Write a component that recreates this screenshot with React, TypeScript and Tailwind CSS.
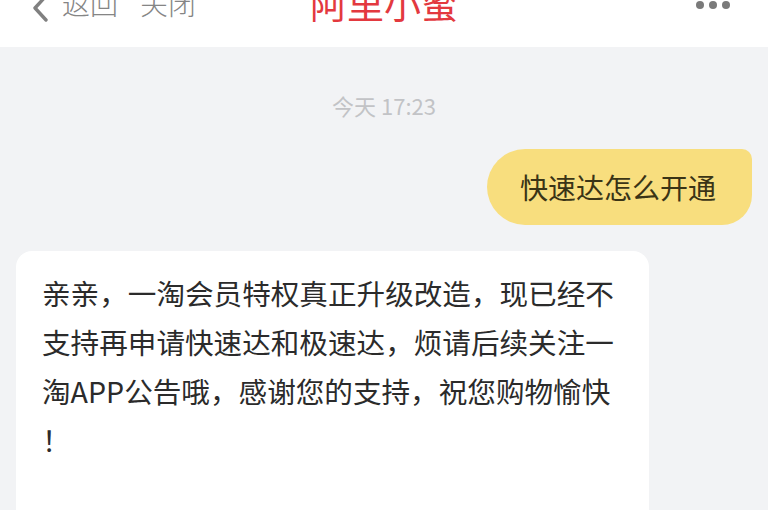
import React from "react";

const font = '"Noto Sans CJK SC", "Noto Sans", sans-serif';

const lines = [
  "亲亲，一淘会员特权真正升级改造，现已经不",
  "支持再申请快速达和极速达，烦请后续关注一",
  "淘APP公告哦，感谢您的支持，祝您购物愉快",
  "！",
];

export default function App() {
  return (
    <div className="w-[768px] h-[510px] overflow-hidden bg-[#f2f3f5] flex flex-col" style={{ fontFamily: font }}>
      <div className="h-[47px] bg-white flex items-end relative shrink-0">
        <div className="flex items-end pb-[30px] pl-[30px]">
          <svg width="22" height="28" viewBox="0 0 22 28" className="mb-[-5px]">
            <path d="M16 2 L5 14 L16 26" fill="none" stroke="#808080" strokeWidth="3.4" strokeLinecap="round" strokeLinejoin="round" />
          </svg>
          <span className="text-[28px] leading-[28px] font-light text-[#858585] ml-[10px]">返回</span>
          <span className="text-[28px] leading-[28px] font-light text-[#858585] ml-[22px]">关闭</span>
        </div>
        <div className="absolute left-[310px] bottom-[25px] text-[37px] leading-[37px] text-[#e3393f]">阿里小蜜</div>
        <div className="absolute right-[38px] top-[1px] flex gap-[5px]">
          <span className="w-[8px] h-[8px] rounded-full bg-[#7a7a7a]" />
          <span className="w-[8px] h-[8px] rounded-full bg-[#7a7a7a]" />
          <span className="w-[8px] h-[8px] rounded-full bg-[#7a7a7a]" />
        </div>
      </div>
      <div className="flex justify-center mt-[47px]">
        <span className="text-[22px] leading-[22px] text-[#c2c3c6]">今天 17:23</span>
      </div>
      <div className="flex justify-end pr-[16px] mt-[33px]">
        <div className="h-[76px] w-[265px] bg-[#f8de7e] rounded-[38px] rounded-tr-[10px] rounded-br-[30px] flex items-center pl-[33px]">
          <span className="text-[28px] leading-[28px] text-[#3a3416]">快速达怎么开通</span>
        </div>
      </div>
      <div className="pl-[16px] mt-[26px]">
        <div className="w-[633px] h-[300px] bg-white rounded-[16px] pl-[26px] pr-[10px] pt-[17px]">
          <div className="text-[28.6px] leading-[49px] text-[#2b2b2b]">
            {lines.map((l, i) => (
              <div key={i} className="whitespace-nowrap">{l}</div>
            ))}
          </div>
        </div>
      </div>
    </div>
  );
}
